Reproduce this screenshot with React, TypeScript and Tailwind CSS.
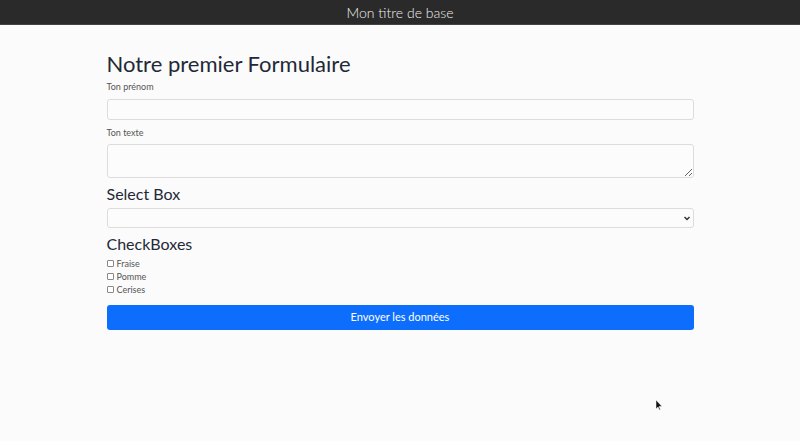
import React from 'react';

const fruits = ['Fraise', 'Pomme', 'Cerises'];

const App: React.FC = () => {
  return (
    <div className="relative min-h-[441px] bg-[#fbfbfb] font-['Lato',sans-serif] text-[#212529]">
      <header className="h-[25px] bg-[#2a2a2a] border-b border-[#444] flex items-center justify-center">
        <span className="text-[14px] font-light text-[#f0f0f0]">Mon titre de base</span>
      </header>

      <form className="w-[587px] mx-auto pt-[25px]" onSubmit={e => e.preventDefault()}>
        <h1 className="text-[22px] leading-[28px] text-[#1f2937] mb-[3px]">Notre premier Formulaire</h1>

        <label htmlFor="prenom" className="block text-[9px] leading-[12px] text-[#555] mb-[6px]">
          Ton prénom
        </label>
        <input
          id="prenom"
          type="text"
          className="block w-full h-[21px] rounded-[3px] border border-[#dcdcdc] bg-[#fcfcfc] mb-[7px]"
        />

        <label htmlFor="texte" className="block text-[9px] leading-[12px] text-[#555] mb-[5px]">
          Ton texte
        </label>
        <textarea
          id="texte"
          className="block w-full h-[34px] rounded-[3px] border border-[#dcdcdc] bg-[#fcfcfc] mb-[5px]"
        />

        <h2 className="text-[16px] leading-[22px] text-[#1f2937] mb-[3px]">Select Box</h2>
        <div className="relative mb-[5px]">
          <select className="block w-full h-[20px] rounded-[3px] border border-[#dcdcdc] bg-[#fcfcfc] appearance-none" />
          <svg
            className="absolute right-[4px] top-[8px] w-[6px] h-[5px]"
            viewBox="0 0 6 5"
            fill="none"
            stroke="#333"
            strokeWidth="1.5"
          >
            <path d="M0.5 1l2.5 2.5 2.5-2.5" />
          </svg>
        </div>

        <h2 className="text-[16px] leading-[22px] text-[#1f2937] mb-[3px]">CheckBoxes</h2>
        <div className="flex flex-col gap-[2px] mb-[8px]">
          {fruits.map(f => (
            <label key={f} className="flex items-center gap-[3px] text-[9px] leading-[11px] text-[#555]">
              <input type="checkbox" className="w-[7px] h-[7px] m-0 appearance-none border border-[#888] rounded-[1px] bg-white" />
              {f}
            </label>
          ))}
        </div>

        <button
          type="submit"
          className="w-full h-[25px] rounded-[3px] bg-[#0d6efd] text-white text-[11px]"
        >
          Envoyer les données
        </button>
      </form>

      <svg className="absolute left-[656px] top-[400px] w-[7px] h-[10px]" viewBox="0 0 7 10">
        <path d="M0 0v9l2-2 1.5 3 1-0.5-1.5-3h3z" fill="#111" stroke="#fff" strokeWidth="0.5" />
      </svg>
    </div>
  );
};

export default App;
